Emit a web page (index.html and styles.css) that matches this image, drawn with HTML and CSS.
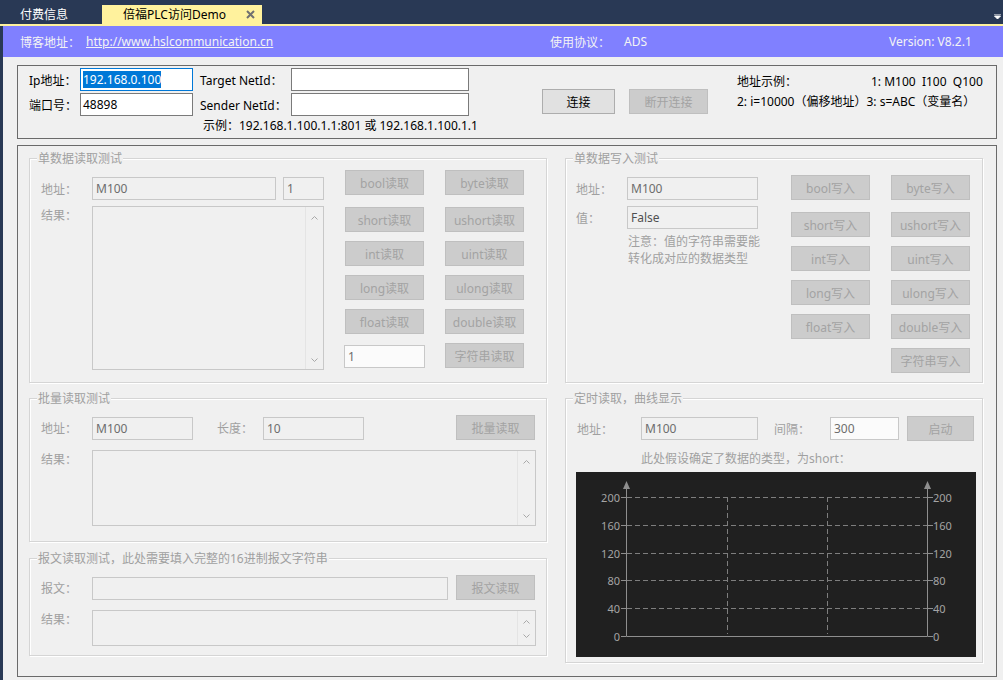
FILE: index.html
```html
<!DOCTYPE html>
<html lang="zh-CN">
<head>
<meta charset="utf-8">
<title>倍福PLC访问Demo</title>
<link rel="stylesheet" href="styles.css">
</head>
<body>
<div class="tabbar">
  <div class="tab">付费信息</div>
  <div class="tab active">
    <span>倍福PLC访问Demo</span>
    <svg class="close" width="9" height="9" viewBox="0 0 9 9"><path d="M1 1L8 8M8 1L1 8" stroke="#707070" stroke-width="2"/></svg>
  </div>
  <svg class="dropdown" width="7" height="5" viewBox="0 0 7 5"><path d="M0 0H7M0.5 2H6.5L3.5 5Z" stroke="#fff" stroke-width="1" fill="#fff"/></svg>
</div>
<div class="tabline"></div>
<div class="app">
  <div class="infobar">
    <div class="info-blog"><span class="info-lbl">博客地址：</span><a class="info-link">http://www.hslcommunication.cn</a></div>
    <div class="info-proto">使用协议：</div>
    <div class="info-ads">ADS</div>
    <div class="info-ver">Version: V8.2.1</div>
  </div>

  <div class="conn">
    <div class="conn-grid">
      <span class="clbl">Ip地址：</span>
      <div class="tb focus"><span class="sel">192.168.0.100</span></div>
      <span class="clbl">Target NetId：</span>
      <div class="tb wide"></div>
      <span class="clbl">端口号：</span>
      <div class="tb">48898</div>
      <span class="clbl">Sender NetId：</span>
      <div class="tb wide"></div>
      <div class="example">示例：192.168.1.100.1.1:801 或 192.168.1.100.1.1</div>
    </div>
    <div class="conn-btns">
      <button class="btn btn-connect">连接</button>
      <button class="btn dis btn-disconnect">断开连接</button>
    </div>
    <div class="addr-ex">
      <div class="addr-row"><span class="addr-title">地址示例：</span><span>1: M100&nbsp;&nbsp;I100&nbsp;&nbsp;Q100</span></div>
      <div class="addr-row">2: i=10000（偏移地址）3: s=ABC（变量名）</div>
    </div>
  </div>

  <div class="main">
    <div class="col col-left">
      <div class="group g-read">
        <div class="gtitle">单数据读取测试</div>
        <div class="gbody read-body">
          <div class="read-left">
            <div class="frow mt10">
              <span class="flbl w51">地址：</span>
              <div class="tb dis w184">M100</div>
              <div class="tb dis w41 ml7">1</div>
            </div>
            <div class="frow top mt6">
              <span class="flbl w51 lbl-top">结果：</span>
              <div class="ta w232 h164">
                <div class="sb">
                  <svg width="7" height="4" viewBox="0 0 7 4"><path d="M0.5 3.5L3.5 0.5L6.5 3.5" fill="none" stroke="#a8a8a8"/></svg>
                  <svg width="7" height="4" viewBox="0 0 7 4"><path d="M0.5 0.5L3.5 3.5L6.5 0.5" fill="none" stroke="#a8a8a8"/></svg>
                </div>
              </div>
            </div>
          </div>
          <div class="btn-grid read-btns">
            <button class="btn dis">bool读取</button>
            <button class="btn dis">byte读取</button>
            <button class="btn dis">short读取</button>
            <button class="btn dis">ushort读取</button>
            <button class="btn dis">int读取</button>
            <button class="btn dis">uint读取</button>
            <button class="btn dis">long读取</button>
            <button class="btn dis">ulong读取</button>
            <button class="btn dis">float读取</button>
            <button class="btn dis">double读取</button>
            <div class="tb white len-tb">1</div>
            <button class="btn dis">字符串读取</button>
          </div>
        </div>
      </div>

      <div class="group g-batch">
        <div class="gtitle">批量读取测试</div>
        <div class="gbody pl11">
          <div class="frow mt8 end">
            <span class="flbl w51 h23">地址：</span>
            <div class="tb dis w101">M100</div>
            <span class="flbl w46 ml24 h23">长度：</span>
            <div class="tb dis w101">10</div>
            <button class="btn dis w79 ml92">批量读取</button>
          </div>
          <div class="frow top mt10">
            <span class="flbl w51 lbl-top">结果：</span>
            <div class="ta w444 h76">
              <div class="sb">
                <svg width="7" height="4" viewBox="0 0 7 4"><path d="M0.5 3.5L3.5 0.5L6.5 3.5" fill="none" stroke="#a8a8a8"/></svg>
                <svg width="7" height="4" viewBox="0 0 7 4"><path d="M0.5 0.5L3.5 3.5L6.5 0.5" fill="none" stroke="#a8a8a8"/></svg>
              </div>
            </div>
          </div>
        </div>
      </div>

      <div class="group g-msg">
        <div class="gtitle">报文读取测试，此处需要填入完整的16进制报文字符串</div>
        <div class="gbody pl11">
          <div class="frow mt8 end">
            <span class="flbl w51 h23">报文：</span>
            <div class="tb dis w356"></div>
            <button class="btn dis w79 ml8">报文读取</button>
          </div>
          <div class="frow top mt10">
            <span class="flbl w51 lbl-top">结果：</span>
            <div class="ta w444 h36">
              <div class="sb">
                <svg width="7" height="4" viewBox="0 0 7 4"><path d="M0.5 3.5L3.5 0.5L6.5 3.5" fill="none" stroke="#a8a8a8"/></svg>
                <svg width="7" height="4" viewBox="0 0 7 4"><path d="M0.5 0.5L3.5 3.5L6.5 0.5" fill="none" stroke="#a8a8a8"/></svg>
              </div>
            </div>
          </div>
        </div>
      </div>
    </div>

    <div class="col col-right">
      <div class="group g-write">
        <div class="gtitle">单数据写入测试</div>
        <div class="gbody write-body">
          <div class="write-left">
            <div class="frow mt10">
              <span class="flbl w51">地址：</span>
              <div class="tb dis w131">M100</div>
            </div>
            <div class="frow mt6">
              <span class="flbl w51">值：</span>
              <div class="tb dis w131 dark">False</div>
            </div>
            <div class="note">注意：值的字符串需要能<br>转化成对应的数据类型</div>
          </div>
          <div class="btn-grid write-btns">
            <button class="btn dis">bool写入</button>
            <button class="btn dis">byte写入</button>
            <button class="btn dis">short写入</button>
            <button class="btn dis">ushort写入</button>
            <button class="btn dis">int写入</button>
            <button class="btn dis">uint写入</button>
            <button class="btn dis">long写入</button>
            <button class="btn dis">ulong写入</button>
            <button class="btn dis">float写入</button>
            <button class="btn dis">double写入</button>
            <div class="spacer"></div>
            <button class="btn dis">字符串写入</button>
          </div>
        </div>
      </div>

      <div class="group g-timer">
        <div class="gtitle">定时读取，曲线显示</div>
        <div class="gbody pl11">
          <div class="frow mt9">
            <span class="flbl w64">地址：</span>
            <div class="tb dis w117">M100</div>
            <span class="flbl w56 ml16">间隔：</span>
            <div class="tb white w69">300</div>
            <button class="btn dis w67 ml8">启动</button>
          </div>
          <div class="hint">此处假设确定了数据的类型，为short：</div>
          <div class="chart">
            <svg width="400" height="185" viewBox="0 0 400 185">
              <g stroke="#7e7e7e" stroke-dasharray="5 3" fill="none">
                <path d="M51 25.5H351M51 53.5H351M51 81.5H351M51 108.5H351M51 136.5H351"/>
                <path d="M151.5 25V162M251.5 25V162"/>
              </g>
              <g stroke="#8e8e8e" fill="none">
                <path d="M50.5 14V164.5H351.5V14"/>
                <path d="M45 25.5H50M45 53.5H50M45 81.5H50M45 108.5H50M45 136.5H50M45 164.5H50"/>
                <path d="M352 25.5H357M352 53.5H357M352 81.5H357M352 108.5H357M352 136.5H357M352 164.5H357"/>
              </g>
              <polygon fill="#8e8e8e" points="50.5,9 47,17 54,17"/>
              <polygon fill="#8e8e8e" points="351.5,9 348,17 355,17"/>
              <g class="ylab" text-anchor="end">
                <text x="44" y="29.5">200</text>
                <text x="44" y="57.5">160</text>
                <text x="44" y="85.5">120</text>
                <text x="44" y="112.5">80</text>
                <text x="44" y="140.5">40</text>
                <text x="44" y="168.5">0</text>
              </g>
              <g class="ylab">
                <text x="357" y="29.5">200</text>
                <text x="357" y="57.5">160</text>
                <text x="357" y="85.5">120</text>
                <text x="357" y="112.5">80</text>
                <text x="357" y="140.5">40</text>
                <text x="357" y="168.5">0</text>
              </g>
            </svg>
          </div>
        </div>
      </div>
    </div>
  </div>
</div>
</body>
</html>
```

FILE: styles.css
```css
* { box-sizing: border-box; }
html, body { margin: 0; padding: 0; }
body {
  width: 1003px;
  height: 680px;
  overflow: hidden;
  background: #f0f0f0;
  font-family: "Noto Sans", "Noto Sans CJK SC", sans-serif;
  font-size: 12px;
  color: #000;
}

/* tab bar */
.tabbar {
  height: 24px;
  background: #293955;
  display: flex;
  align-items: flex-end;
}
.tab {
  height: 19px;
  line-height: 19px;
  width: 102px;
  padding-left: 20px;
  color: #fff;
  white-space: nowrap;
}
.tab.active {
  width: 160px;
  padding-left: 21px;
  padding-right: 7px;
  background: #fff29d;
  color: #000;
  display: flex;
  align-items: center;
  justify-content: space-between;
}
.close { display: block; }
.dropdown { margin-left: auto; margin-right: 2px; align-self: center; margin-top: 8px; }
.tabline { height: 2px; background: #fff29d; }

.app {
  border-left: 3px solid #293955;
  height: 654px;
}

/* info bar */
.infobar {
  height: 31px;
  background: #8080ff;
  color: #f4f4f4;
  display: flex;
  align-items: center;
  padding-left: 17px;
  white-space: nowrap;
}
.info-blog { width: 530px; display: flex; }
.info-lbl { width: 66px; }
.info-link { text-decoration: underline; color: #f4f4f4; }
.info-proto { width: 74px; }
.info-ads { width: 265px; }

/* connection box */
.conn {
  margin: 8px 0 0 14px;
  width: 980px;
  height: 74px;
  border: 1px solid #6a6a6a;
  padding: 2px 0 0 11px;
  display: flex;
  align-items: flex-start;
}
.conn-grid {
  display: grid;
  grid-template-columns: 51px 120px 91px 178px;
  grid-template-rows: 23px 23px 15px;
  row-gap: 2px;
  align-items: center;
}
.clbl { white-space: nowrap; }
.tb {
  width: 113px;
  height: 23px;
  border: 1px solid #7a7a7a;
  background: #fff;
  padding-left: 2px;
  line-height: 21px;
  white-space: nowrap;
  overflow: hidden;
}
.tb.wide { width: 178px; }
.tb.focus { border-color: #0078d7; }
.sel { background: #0078d7; color: #fff; }
.example {
  grid-column: 3 / 5;
  padding-left: 3px;
  line-height: 15px;
  white-space: nowrap;
}
.conn-btns {
  margin: 21px 0 0 73px;
  display: flex;
  gap: 14px;
}
.btn {
  height: 25px;
  padding: 0;
  font: inherit;
  border: 1px solid #adadad;
  background: #e1e1e1;
  color: #000;
  white-space: nowrap;
}
.btn-connect { width: 73px; }
.btn-disconnect { width: 79px; }
.btn.dis {
  background: #cccccc;
  border-color: #bfbfbf;
  color: #a3a3a3;
}
.addr-ex {
  margin: 4px 0 0 29px;
  line-height: 20px;
  white-space: nowrap;
}
.addr-row { display: flex; }
.addr-title { width: 134px; }

/* main area */
.main {
  margin: 6px 0 0 14px;
  width: 980px;
  height: 532px;
  border: 1px solid #6a6a6a;
  padding: 12px 0 0 11px;
  display: flex;
  gap: 18px;
  align-items: flex-start;
}
.col { display: flex; flex-direction: column; gap: 15px; }
.col-left { width: 518px; }
.col-right { width: 418px; }
.col-left .g-msg { margin-top: 1px; }

.group {
  border: 1px solid #d5d5d5;
  box-shadow: inset 1px 1px 0 #ffffff, 1px 1px 0 #ffffff;
}
.gtitle {
  width: fit-content;
  height: 16px;
  line-height: 16px;
  margin: -8px 0 0 7px;
  padding: 0 1px;
  background: #f0f0f0;
  color: #a0a0a0;
  white-space: nowrap;
}
.g-read, .g-write { height: 225px; }
.g-batch { height: 144px; }
.g-msg { height: 98px; }
.g-timer { height: 265px; }

.gbody { display: block; }
.pl11 { padding-left: 11px; }
.read-body { display: flex; align-items: flex-start; padding-left: 11px; }
.read-left { width: 283px; }
.write-body { display: flex; align-items: flex-start; padding-left: 10px; }
.write-left { width: 182px; }

.frow { display: flex; align-items: center; }
.frow.top { align-items: flex-start; }
.frow.end { align-items: flex-end; }
.flbl { color: #a0a0a0; white-space: nowrap; flex: none; }
.lbl-top { margin-top: 2px; line-height: 16px; }
.h23 { height: 23px; line-height: 23px; }

.tb.dis {
  background: #f0f0f0;
  border-color: #c8c8c8;
  color: #6d6d6d;
  padding-left: 3px;
}
.tb.dis.dark { color: #505050; }
.tb.white {
  background: #fbfbfb;
  border-color: #c8c8c8;
  color: #6d6d6d;
  padding-left: 3px;
}

.w41 { width: 41px; }
.w46 { width: 46px; }
.w51 { width: 51px; }
.w56 { width: 56px; }
.w64 { width: 64px; }
.w67 { width: 67px; }
.w69 { width: 69px; }
.w79 { width: 79px; }
.w101 { width: 101px; }
.w117 { width: 117px; }
.w131 { width: 131px; }
.w184 { width: 184px; }
.w232 { width: 232px; }
.w356 { width: 356px; }
.w444 { width: 444px; }
.h36 { height: 36px; }
.h76 { height: 76px; }
.h164 { height: 164px; }
.ml7 { margin-left: 7px; }
.ml8 { margin-left: 8px; }
.ml16 { margin-left: 16px; }
.ml24 { margin-left: 24px; }
.ml92 { margin-left: 92px; }
.mt6 { margin-top: 6px; }
.mt8 { margin-top: 8px; }
.mt9 { margin-top: 9px; }
.mt10 { margin-top: 10px; }

/* textarea with scrollbar */
.ta {
  border: 1px solid #c8c8c8;
  background: #f0f0f0;
  display: flex;
  justify-content: flex-end;
  flex: none;
}
.sb {
  width: 18px;
  border-left: 1px solid #e4e4e4;
  display: flex;
  flex-direction: column;
  justify-content: space-between;
  align-items: center;
  padding: 9px 0 7px;
}
.sb svg { display: block; }

/* button grids */
.btn-grid {
  display: grid;
  grid-template-columns: 79px 79px;
  grid-template-rows: 28px repeat(5, 25px);
  column-gap: 21px;
  row-gap: 9px;
}
.btn-grid .btn { width: 79px; align-self: start; }
.read-btns { margin: 3px 0 0 21px; }
.write-btns { margin: 8px 0 0 33px; }
.len-tb { width: 81px; margin-left: -1px; align-self: end; }
.spacer { width: 79px; }

.note {
  margin-top: 4px;
  padding-left: 52px;
  line-height: 17px;
  color: #a0a0a0;
  white-space: nowrap;
}

.hint {
  margin-top: 10px;
  padding-left: 64px;
  line-height: 16px;
  color: #a0a0a0;
  white-space: nowrap;
}
.chart {
  margin: 5px 0 0 -1px;
  width: 400px;
  height: 185px;
  background: #202020;
}
.chart svg { display: block; }
.ylab text {
  font-family: "Noto Sans", sans-serif;
  font-size: 11px;
  fill: #a4a4a4;
}
```
